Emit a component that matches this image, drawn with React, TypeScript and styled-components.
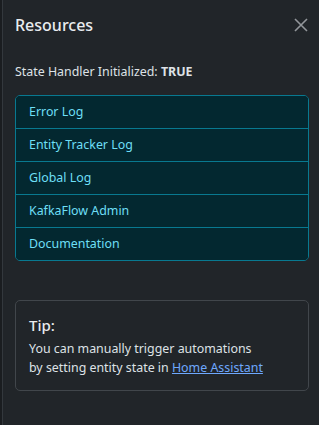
import { createGlobalStyle, styled } from "styled-components";

const GlobalStyle = createGlobalStyle`
  html, body {
    margin: 0;
    padding: 0;
    background: #1a1d20;
  }
  body {
    font-family: "Noto Sans", "DejaVu Sans", sans-serif;
    color: #dee2e6;
  }
`;

const Backdrop = styled.div`
  height: 425px;
  padding-left: 2px;
  background: #1a1d20;
`;

const Panel = styled.aside`
  height: 100%;
  box-sizing: border-box;
  background: #212529;
  border-left: 1px solid #33383d;
  display: flex;
  flex-direction: column;
`;

const Header = styled.div`
  display: flex;
  align-items: center;
  justify-content: space-between;
  padding: 14px 9px 0 12px;
`;

const Title = styled.h5`
  margin: 0;
  font-size: 16px;
  font-weight: 500;
  color: #e9ecef;
`;

const CloseButton = styled.button`
  width: 18px;
  height: 18px;
  padding: 0;
  border: none;
  background: transparent;
  cursor: pointer;
  opacity: 0.6;
  display: flex;
  align-items: center;
  justify-content: center;
`;

const Body = styled.div`
  padding: 27px 10px 0 12px;
  display: flex;
  flex-direction: column;
`;

const Status = styled.p`
  margin: 0 0 14px;
  font-size: 12.4px;
  line-height: 18px;
`;

const List = styled.div`
  display: flex;
  flex-direction: column;
  border: 1px solid #087990;
  border-radius: 5px;
  overflow: hidden;
`;

const Item = styled.a`
  display: block;
  padding: 7px 13px;
  font-size: 12.4px;
  line-height: 18px;
  color: #6edff6;
  background: #032830;
  text-decoration: none;
  & + & {
    border-top: 1px solid #087990;
  }
`;

const Card = styled.div`
  margin-top: 39px;
  border: 1px solid #41464b;
  border-radius: 5px;
  padding: 14px 13px 13px;
`;

const CardTitle = styled.h6`
  margin: 0 0 4px;
  font-size: 15px;
  font-weight: 500;
  color: #e9ecef;
`;

const CardText = styled.p`
  margin: 0;
  font-size: 12.4px;
  line-height: 19px;
`;

const Link = styled.a`
  color: #6ea8fe;
`;

const links = [
  "Error Log",
  "Entity Tracker Log",
  "Global Log",
  "KafkaFlow Admin",
  "Documentation",
];

export default function App() {
  return (
    <>
      <GlobalStyle />
      <Backdrop>
        <Panel>
          <Header>
            <Title>Resources</Title>
            <CloseButton aria-label="Close">
              <svg width="14" height="14" viewBox="0 0 14 14">
                <path
                  d="M1 1L13 13M13 1L1 13"
                  stroke="#dee2e6"
                  strokeWidth="1.6"
                />
              </svg>
            </CloseButton>
          </Header>
          <Body>
            <Status>
              State Handler Initialized: <b>TRUE</b>
            </Status>
            <List>
              {links.map((l) => (
                <Item key={l} href="#">
                  {l}
                </Item>
              ))}
            </List>
            <Card>
              <CardTitle>Tip:</CardTitle>
              <CardText>
                You can manually trigger automations
                <br />
                by setting entity state in <Link href="#">Home Assistant</Link>
              </CardText>
            </Card>
          </Body>
        </Panel>
      </Backdrop>
    </>
  );
}
